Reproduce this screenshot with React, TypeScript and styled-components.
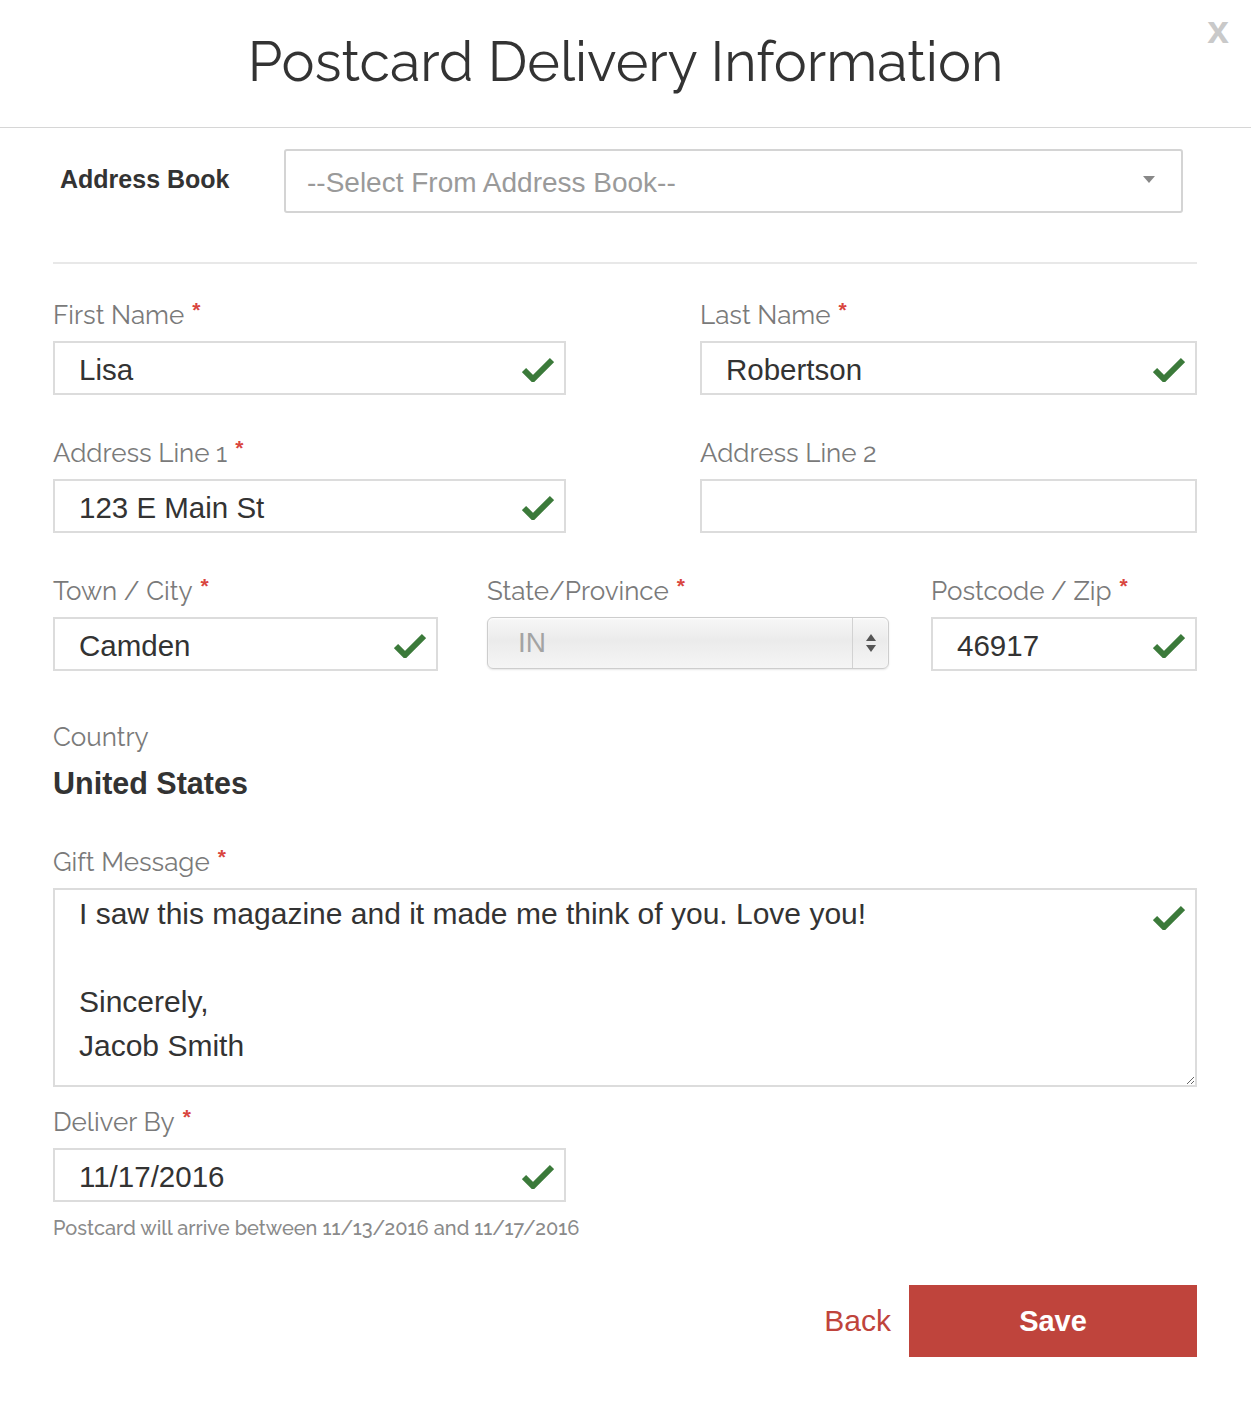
import React from "react";
import styled, { createGlobalStyle } from "styled-components";

const Global = createGlobalStyle`
  html, body { margin: 0; padding: 0; background: #fff; }
  body { font-family: "Liberation Sans", Arial, sans-serif; }
  * { box-sizing: border-box; }
`;

const Modal = styled.div`
  width: 1251px;
  min-height: 1416px;
  background: #fff;
`;

const Header = styled.header`
  position: relative;
  height: 128px;
  border-bottom: 1px solid #d6d6d6;
  display: flex;
  align-items: center;
  justify-content: center;
`;

const Title = styled.h1`
  margin: 0;
  padding-bottom: 4px;
  font-family: "Raleway", "Lato", sans-serif;
  font-weight: 400;
  font-size: 55.5px;
  color: #333;
`;

const Close = styled.span`
  position: absolute;
  right: 22px;
  top: 8px;
  font-family: "Liberation Sans", Arial, sans-serif;
  font-weight: 700;
  font-size: 39px;
  color: #c9c9c9;
`;

const Body = styled.div`
  padding: 0 54px 0 53px;
`;

const AddressRow = styled.div`
  display: flex;
  align-items: center;
  padding-top: 21px;
`;

const AddressLabel = styled.div`
  width: 231px;
  padding-left: 7px;
  padding-bottom: 4px;
  font-weight: 700;
  font-size: 25px;
  color: #333;
`;

const FakeSelect = styled.div`
  flex: 0 0 899px;
  height: 64px;
  border: 2px solid #d4d4d4;
  border-radius: 3px;
  display: flex;
  align-items: center;
  justify-content: space-between;
  padding: 3px 26px 0 21px;
  font-size: 28px;
  color: #9a9a9a;
`;

const Caret = styled.span`
  width: 0;
  height: 0;
  border-left: 6px solid transparent;
  border-right: 6px solid transparent;
  border-top: 7px solid #888;
  margin-top: -6px;
`;

const Divider = styled.hr`
  margin: 49px 0 0;
  border: 0;
  border-top: 2px solid #e8e8e8;
`;

const Grid = styled.div<{ $cols: string; $top: number }>`
  display: grid;
  grid-template-columns: ${(p) => p.$cols};
  margin-top: ${(p) => p.$top}px;
`;

const Field = styled.div<{ $w?: string }>`
  width: ${(p) => p.$w || "100%"};
`;

const Label = styled.label`
  display: block;
  height: 30px;
  line-height: 30px;
  margin-bottom: 11px;
  font-family: "Raleway", "Lato", sans-serif;
  font-size: 26px;
  color: #7a7a7a;
  white-space: nowrap;
`;

const Req = styled.span`
  display: inline-block;
  font-family: "Liberation Sans", Arial, sans-serif;
  font-weight: 700;
  color: #d9463f;
  font-size: 21px;
  line-height: 1;
  vertical-align: top;
  position: relative;
  top: -1px;
  margin-left: 8px;
`;

const InputWrap = styled.div`
  position: relative;
`;

const TextInput = styled.input`
  display: block;
  width: 100%;
  height: 54px;
  border: 2px solid #dcdcdc;
  border-radius: 0;
  padding: 3px 60px 0 24px;
  font-family: "Liberation Sans", Arial, sans-serif;
  font-size: 29.5px;
  color: #333;
  background: #fff;
  outline: none;
`;

const Check = styled.svg`
  position: absolute;
  right: 12px;
  top: 50%;
  margin-top: -12px;
  width: 32px;
  height: 26px;
`;

const TextAreaCheck = styled(Check)`
  top: 16px;
  margin-top: 0;
`;

const StateSelect = styled.div`
  width: 402px;
  height: 52px;
  border: 1px solid #cdcdcd;
  border-radius: 6px;
  background: linear-gradient(#f7f7f7, #ebebeb 45%, #f5f5f5);
  box-shadow: inset 0 1px 2px rgba(255, 255, 255, 0.9), 0 1px 2px rgba(0, 0, 0, 0.1);
  display: flex;
  align-items: stretch;
`;

const StateValue = styled.div`
  flex: 1;
  display: flex;
  align-items: center;
  padding-left: 30px;
  font-size: 28px;
  color: #a3a3a3;
`;

const StateArrows = styled.div`
  width: 36px;
  border-left: 1px solid #d2d2d2;
  display: flex;
  align-items: center;
  justify-content: center;
`;

const Country = styled.div`
  margin-top: 51px;
`;

const CountryLabel = styled.div`
  height: 30px;
  line-height: 30px;
  font-family: "Raleway", "Lato", sans-serif;
  font-size: 26px;
  color: #7a7a7a;
`;

const CountryValue = styled.div`
  margin-top: 14px;
  font-weight: 700;
  font-size: 30.5px;
  color: #333;
`;

const Block = styled.div<{ $top: number }>`
  margin-top: ${(p) => p.$top}px;
`;

const TextArea = styled.textarea`
  display: block;
  width: 100%;
  height: 199px;
  border: 2px solid #dcdcdc;
  border-radius: 0;
  padding: 2px 60px 0 24px;
  font-family: "Liberation Sans", Arial, sans-serif;
  font-size: 30px;
  line-height: 44px;
  color: #333;
  resize: vertical;
  outline: none;
`;

const Help = styled.p`
  margin: 14px 0 0;
  font-family: "Raleway", "Lato", sans-serif;
  font-weight: 500;
  font-size: 20px;
  color: #8a8a8a;
`;

const Actions = styled.div`
  display: flex;
  justify-content: flex-end;
  align-items: center;
  margin-top: 45px;
  gap: 18px;
`;

const BackButton = styled.button`
  border: 0;
  background: none;
  padding: 0;
  font-family: "Liberation Sans", Arial, sans-serif;
  font-size: 30px;
  color: #bf443c;
  cursor: pointer;
`;

const SaveButton = styled.button`
  width: 288px;
  height: 72px;
  border: 0;
  background: #bf443c;
  color: #fff;
  font-family: "Liberation Sans", Arial, sans-serif;
  font-weight: 700;
  font-size: 29px;
  cursor: pointer;
`;

const CheckIcon = ({ as: Comp = Check }: { as?: typeof Check }) => (
  <Comp viewBox="0 0 32 26">
    <path d="M2 14 L11 23 L30 4" fill="none" stroke="#3b7a3a" strokeWidth="6" strokeLinejoin="miter" />
  </Comp>
);

const Input = ({ value, ok = true }: { value: string; ok?: boolean }) => (
  <InputWrap>
    <TextInput readOnly value={value} />
    {ok && <CheckIcon />}
  </InputWrap>
);

const FieldLabel = ({ text, req }: { text: string; req?: boolean }) => (
  <Label>
    {text}
    {req && <Req>*</Req>}
  </Label>
);

const message = "I saw this magazine and it made me think of you. Love you!\n\nSincerely,\nJacob Smith";

export default function App() {
  return (
    <>
      <Global />
      <Modal>
        <Header>
          <Title>Postcard Delivery Information</Title>
          <Close>x</Close>
        </Header>
        <Body>
          <AddressRow>
            <AddressLabel>Address Book</AddressLabel>
            <FakeSelect>
              <span>--Select From Address Book--</span>
              <Caret />
            </FakeSelect>
          </AddressRow>
          <Divider />

          <Grid $cols="647px 1fr" $top={36}>
            <Field $w="513px">
              <FieldLabel text="First Name" req />
              <Input value="Lisa" />
            </Field>
            <Field>
              <FieldLabel text="Last Name" req />
              <Input value="Robertson" />
            </Field>
          </Grid>

          <Grid $cols="647px 1fr" $top={43}>
            <Field $w="513px">
              <FieldLabel text="Address Line 1" req />
              <Input value="123 E Main St" />
            </Field>
            <Field>
              <FieldLabel text="Address Line 2" />
              <Input value="" ok={false} />
            </Field>
          </Grid>

          <Grid $cols="434px 444px 1fr" $top={43}>
            <Field $w="385px">
              <FieldLabel text="Town / City" req />
              <Input value="Camden" />
            </Field>
            <Field $w="402px">
              <FieldLabel text="State/Province" req />
              <StateSelect>
                <StateValue>IN</StateValue>
                <StateArrows>
                  <svg width="12" height="20" viewBox="0 0 12 20">
                    <path d="M6 1 L11 8 H1 Z" fill="#555" />
                    <path d="M6 19 L11 12 H1 Z" fill="#555" />
                  </svg>
                </StateArrows>
              </StateSelect>
            </Field>
            <Field>
              <FieldLabel text="Postcode / Zip" req />
              <Input value="46917" />
            </Field>
          </Grid>

          <Country>
            <CountryLabel>Country</CountryLabel>
            <CountryValue>United States</CountryValue>
          </Country>

          <Block $top={46}>
            <FieldLabel text="Gift Message" req />
            <InputWrap>
              <TextArea readOnly value={message} />
              <CheckIcon as={TextAreaCheck} />
            </InputWrap>
          </Block>

          <Block $top={20}>
            <Field $w="513px">
              <FieldLabel text="Deliver By" req />
              <Input value="11/17/2016" />
            </Field>
            <Help>Postcard will arrive between 11/13/2016 and 11/17/2016</Help>
          </Block>

          <Actions>
            <BackButton>Back</BackButton>
            <SaveButton>Save</SaveButton>
          </Actions>
        </Body>
      </Modal>
    </>
  );
}
